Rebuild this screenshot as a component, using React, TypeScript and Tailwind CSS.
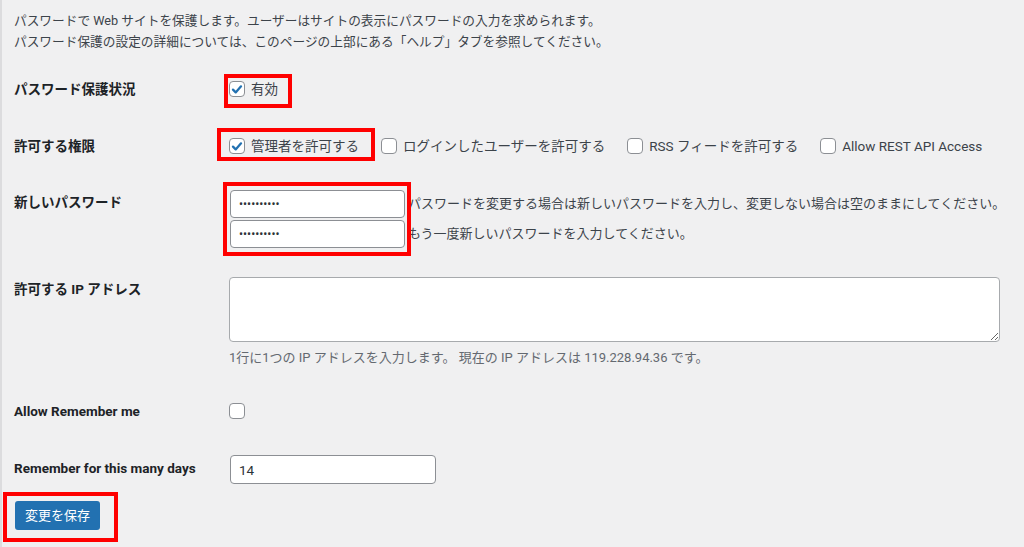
import React from "react";

const font = { fontFamily: 'Roboto, "Noto Sans CJK JP", sans-serif' };

function Check({ checked = false }: { checked?: boolean }) {
  return (
    <span className="flex h-4 w-4 shrink-0 items-center justify-center rounded-[4px] border border-[#8c8f94] bg-white">
      {checked && (
        <svg viewBox="0 0 16 16" className="h-[15px] w-[15px]">
          <path d="M3.4 8.2 L6.5 11.3 L12.6 4.4" fill="none" stroke="#2271b1" strokeWidth="2.6" strokeLinecap="round" strokeLinejoin="round" />
        </svg>
      )}
    </span>
  );
}

function Option({ label, checked = false }: { label: string; checked?: boolean }) {
  return (
    <label className="flex items-center gap-[6px] text-[13.5px] leading-5 text-[#3c434a]">
      <Check checked={checked} />
      <span>{label}</span>
    </label>
  );
}

function Row({ label, className, children, labelClass = "" }: { label: string; className?: string; children: React.ReactNode; labelClass?: string }) {
  return (
    <div className={"flex items-start " + (className ?? "")}>
      <div className={"w-[215px] shrink-0 text-[13.5px] font-bold leading-5 text-[#1d2327] " + labelClass}>{label}</div>
      <div className="flex-1">{children}</div>
    </div>
  );
}

function RedBox({ className }: { className: string }) {
  return <div className={"pointer-events-none absolute border-4 border-[#ff0000] " + className} />;
}

export default function App() {
  return (
    <div style={font} className="relative h-[547px] w-[1024px] overflow-hidden border-l-2 border-[#dcdcde] bg-[#f0f0f1] pl-[12px]">
      <div className="pt-[10px] text-[12.7px] leading-[21px] text-[#3c434a]">
        <p>パスワードで Web サイトを保護します。ユーザーはサイトの表示にパスワードの入力を求められます。</p>
        <p>パスワード保護の設定の詳細については、このページの上部にある「ヘルプ」タブを参照してください。</p>
      </div>

      <Row label="パスワード保護状況" className="mt-[27px]">
        <div>
          <Option label="有効" checked />
        </div>
      </Row>

      <Row label="許可する権限" className="mt-[37px]">
        <div className="flex items-center gap-[22px]">
          <Option label="管理者を許可する" checked />
          <Option label="ログインしたユーザーを許可する" />
          <Option label="RSS フィードを許可する" />
          <Option label="Allow REST API Access" />
        </div>
      </Row>

      <Row label="新しいパスワード" className="mt-[34px]" labelClass="pt-[2px]">
        <div className="flex flex-col gap-[2px] pl-[1px]">
          <div className="flex items-center gap-[3px]">
            <input type="password" readOnly value="xxxxxxxxxx" className="h-[28px] w-[175px] rounded-[4px] border border-[#8c8f94] bg-white px-2 text-[12px] text-[#2c3338] outline-none" />
            <span className="text-[13px] text-[#3c434a]">パスワードを変更する場合は新しいパスワードを入力し、変更しない場合は空のままにしてください。</span>
          </div>
          <div className="flex items-center gap-[3px]">
            <input type="password" readOnly value="xxxxxxxxxx" className="h-[28px] w-[175px] rounded-[4px] border border-[#8c8f94] bg-white px-2 text-[12px] text-[#2c3338] outline-none" />
            <span className="text-[13px] text-[#3c434a]">もう一度新しいパスワードを入力してください。</span>
          </div>
        </div>
      </Row>

      <Row label="許可する IP アドレス" className="mt-[29px]" labelClass="pt-[2px]">
        <textarea readOnly className="block h-[65px] w-[771px] rounded-[4px] border border-[#a7aaad] bg-white outline-none" />
        <p className="mt-[6px] text-[13px] leading-5 text-[#646970]">1行に1つの IP アドレスを入力します。 現在の IP アドレスは 119.228.94.36 です。</p>
      </Row>

      <Row label="Allow Remember me" className="mt-[33px]">
        <div className="flex h-5 items-center">
          <Check />
        </div>
      </Row>

      <div className="mt-[34px] flex items-start">
        <div className="w-[216px] shrink-0 pt-[3px] text-[13.5px] font-bold leading-5 text-[#1d2327]">Remember for this many days</div>
        <input type="text" readOnly value="14" className="h-[29px] w-[206px] rounded-[4px] border border-[#8c8f94] bg-white px-2 text-[13.5px] text-[#2c3338] outline-none" />
      </div>

      <button className="mt-[17px] ml-[1px] h-[29px] w-[85px] rounded-[3px] bg-[#2271b1] text-[13px] text-white">変更を保存</button>

      <RedBox className="left-[222px] top-[74px] h-[34px] w-[68px]" />
      <RedBox className="left-[215px] top-[128px] h-[33px] w-[158px]" />
      <RedBox className="left-[221px] top-[182px] h-[74px] w-[188px]" />
      <RedBox className="left-[1px] top-[492px] h-[50px] w-[115px]" />
    </div>
  );
}
